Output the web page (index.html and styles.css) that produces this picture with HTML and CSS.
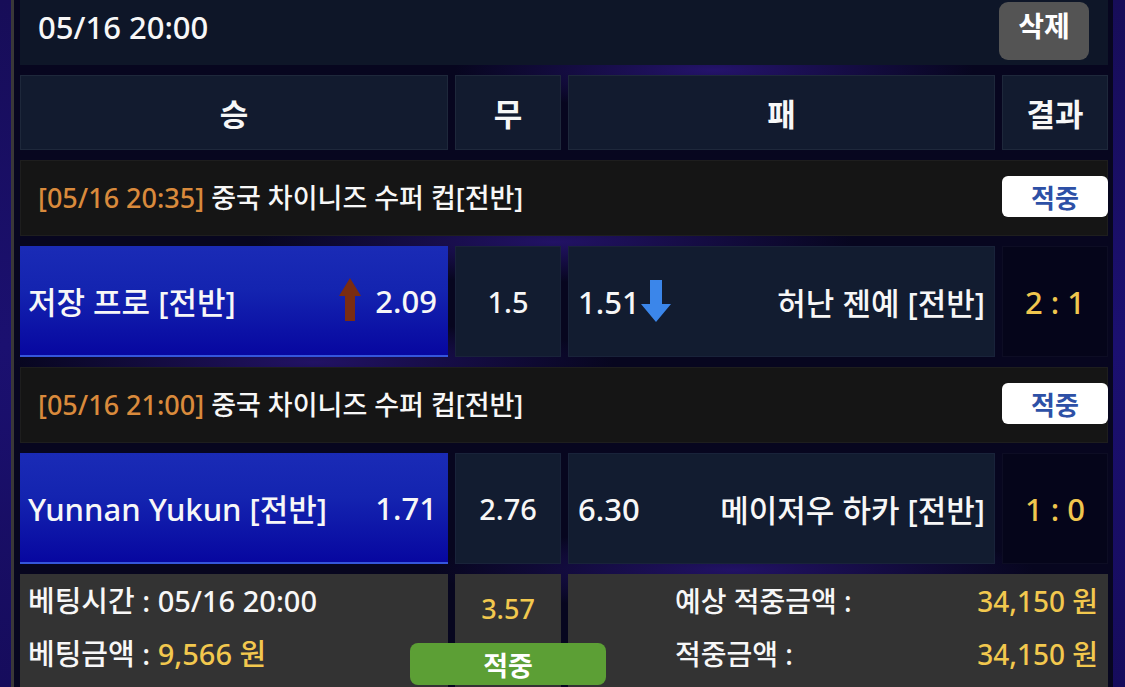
FILE: index.html
```html
<!DOCTYPE html>
<html lang="ko">
<head>
<meta charset="utf-8">
<title>베팅내역</title>
<link rel="stylesheet" href="styles.css">
</head>
<body>
<div class="page">
  <div class="frame">
    <div class="bet-head">
      <span class="bet-date">05/16 20:00</span>
      <button class="btn-del">삭제</button>
    </div>

    <div class="grid col-head">
      <div class="ch">승</div>
      <div class="ch">무</div>
      <div class="ch">패</div>
      <div class="ch">결과</div>
    </div>

    <div class="league">
      <span class="lg-name"><span class="lg-time">[05/16 20:35]</span> 중국 차이니즈 수퍼 컵[전반]</span>
      <span class="badge">적중</span>
    </div>

    <div class="grid match">
      <div class="cell home">
        <span class="team">저장 프로 [전반]</span>
        <span class="odd"><svg class="arrow up" viewBox="0 0 22 43" width="22" height="43"><path d="M11 0 L22 18 L16 18 L16 43 L6 43 L6 18 L0 18 Z" fill="#7a2c12"/></svg>2.09</span>
      </div>
      <div class="cell draw">1.5</div>
      <div class="cell away">
        <span class="odd">1.51<svg class="arrow down" viewBox="0 0 30 42" width="30" height="42"><path d="M9 0 L21 0 L21 24 L30 24 L15 42 L0 24 L9 24 Z" fill="#3b86ea"/></svg></span>
        <span class="team">허난 젠예 [전반]</span>
      </div>
      <div class="cell result">2 : 1</div>
    </div>

    <div class="league">
      <span class="lg-name"><span class="lg-time">[05/16 21:00]</span> 중국 차이니즈 수퍼 컵[전반]</span>
      <span class="badge">적중</span>
    </div>

    <div class="grid match">
      <div class="cell home">
        <span class="team">Yunnan Yukun [전반]</span>
        <span class="odd">1.71</span>
      </div>
      <div class="cell draw">2.76</div>
      <div class="cell away">
        <span class="odd">6.30</span>
        <span class="team">메이저우 하카 [전반]</span>
      </div>
      <div class="cell result">1 : 0</div>
    </div>

    <div class="grid summary">
      <div class="sum-left">
        <div class="sum-line">베팅시간 : 05/16 20:00</div>
        <div class="sum-line">베팅금액 : <span class="yellow">9,566 원</span></div>
      </div>
      <div class="sum-mid"><span class="yellow">3.57</span></div>
      <div class="sum-right">
        <div class="sum-row"><span>예상 적중금액 :</span><span class="yellow">34,150 원</span></div>
        <div class="sum-row"><span>적중금액 :</span><span class="yellow">34,150 원</span></div>
      </div>
      <button class="btn-hit">적중</button>
    </div>
  </div>
</div>
</body>
</html>
```

FILE: styles.css
```css
* {
  box-sizing: border-box;
}

html, body {
  margin: 0;
  padding: 0;
  height: 100%;
  overflow: hidden;
}

body {
  background: linear-gradient(180deg, #170d58 0%, #1b1070 50%, #160c5c 100%);
  font-family: "Noto Sans", "Noto Sans CJK KR", sans-serif;
  color: #f7f7f7;
}

.page {
  margin-left: 11px;
  width: 1102px;
  height: 687px;
  border-left: 3px solid #3a3838;
  padding: 0 5px 0 6px;
  background:
    radial-gradient(ellipse 260px 40px at 700px 70px, rgba(60, 30, 170, 0.55), transparent),
    radial-gradient(ellipse 300px 40px at 540px 242px, rgba(60, 30, 170, 0.5), transparent),
    radial-gradient(ellipse 300px 40px at 300px 362px, rgba(60, 30, 170, 0.5), transparent),
    radial-gradient(ellipse 300px 40px at 720px 570px, rgba(60, 30, 170, 0.5), transparent),
    #07061f;
}

.frame {
  display: flex;
  flex-direction: column;
  gap: 10px;
}

/* top bet header */
.bet-head {
  height: 65px;
  background: #0e1628;
  display: flex;
  justify-content: space-between;
  align-items: flex-start;
  padding: 2px 19px 0 18px;
}

.bet-date {
  margin-top: 5px;
  font-size: 31px;
  line-height: 40px;
  font-weight: 500;
}

.btn-del {
  width: 90px;
  height: 58px;
  border: none;
  border-radius: 9px;
  background: #545454;
  color: #fff;
  font-family: "Noto Sans CJK KR", sans-serif;
  font-size: 28px;
  font-weight: 700;
  padding: 0 0 12px;
}

/* grid */
.grid {
  display: grid;
  grid-template-columns: 428px 106px 427px 106px;
  column-gap: 7px;
}

.col-head {
  height: 75px;
}

.ch {
  background: #121b2f;
  border: 1px solid #1e283b;
  display: flex;
  align-items: center;
  justify-content: center;
  font-family: "Noto Sans CJK KR", sans-serif;
  font-size: 31px;
  font-weight: 700;
}

/* league */
.league {
  height: 76px;
  background: #151515;
  border: 1px solid #1e1e1e;
  display: flex;
  align-items: center;
  justify-content: space-between;
  padding-left: 17px;
}

.lg-name {
  font-size: 27px;
  font-weight: 500;
  margin-top: -3px;
}

.lg-time {
  color: #d98a3c;
}

.badge {
  width: 106px;
  height: 41px;
  margin-right: -1px;
  margin-top: -3px;
  background: #fff;
  border-radius: 6px;
  color: #2d50a6;
  font-family: "Noto Sans CJK KR", sans-serif;
  font-size: 26px;
  font-weight: 700;
  display: flex;
  align-items: center;
  justify-content: center;
}

/* match */
.match {
  height: 111px;
}

.cell {
  display: flex;
  align-items: center;
  font-size: 31px;
  font-weight: 500;
}

.home {
  background: linear-gradient(180deg, #1a2bb6 0%, #1424b0 40%, #0707a0 100%);
  border-bottom: 2px solid #3556dc;
  justify-content: space-between;
  padding: 0 11px 0 8px;
}

.draw {
  background: #121c30;
  border: 1px solid #19233a;
  justify-content: center;
  font-size: 29px;
}

.away {
  background: #121c30;
  border: 1px solid #19233a;
  justify-content: space-between;
  padding: 0 9px 0 9px;
}

.result {
  background: #05051a;
  border: 1px solid #0d0d24;
  justify-content: center;
  color: #f0c64e;
}

.odd {
  display: inline-flex;
  align-items: center;
}

.arrow.up {
  margin-right: 14px;
  margin-top: -2px;
}

.arrow.down {
  margin-left: 1px;
  margin-top: -2px;
}

/* summary */
.summary {
  position: relative;
  height: 120px;
  grid-template-columns: 428px 106px 540px;
}

.sum-left,
.sum-mid,
.sum-right {
  background: #333333;
}

.sum-left {
  padding: 8px 8px 0;
  display: flex;
  flex-direction: column;
  gap: 15px;
  font-size: 29px;
  font-weight: 500;
}

.sum-line {
  line-height: 38px;
}

.sum-mid {
  display: flex;
  justify-content: center;
  padding-top: 16px;
  font-size: 27px;
  font-weight: 500;
}

.sum-right {
  padding: 8px 10px 0 107px;
  display: flex;
  flex-direction: column;
  gap: 15px;
  font-size: 28px;
  font-weight: 500;
}

.sum-row {
  display: flex;
  justify-content: space-between;
  line-height: 38px;
}

.yellow {
  color: #f2c84e;
}

.btn-hit {
  position: absolute;
  left: 390px;
  top: 69px;
  width: 196px;
  height: 42px;
  border: none;
  border-radius: 8px;
  background: #5c9f35;
  color: #fff;
  font-family: "Noto Sans CJK KR", sans-serif;
  font-size: 27px;
  font-weight: 700;
  padding: 0;
}
```
